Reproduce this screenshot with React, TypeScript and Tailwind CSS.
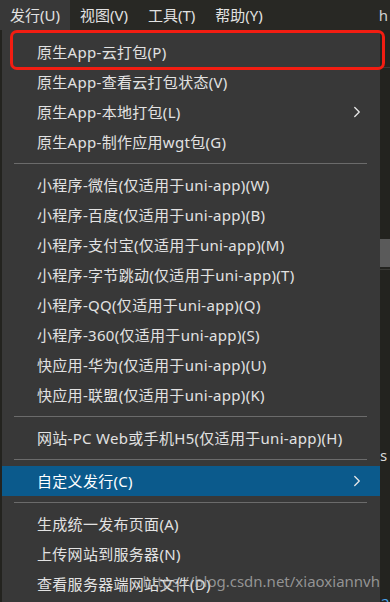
import { ChevronRight } from "lucide-react";

type Entry = { label: string; sub?: boolean; active?: boolean } | "sep";

const entries: Entry[] = [
  { label: "原生App-云打包(P)" },
  { label: "原生App-查看云打包状态(V)" },
  { label: "原生App-本地打包(L)", sub: true },
  { label: "原生App-制作应用wgt包(G)" },
  "sep",
  { label: "小程序-微信(仅适用于uni-app)(W)" },
  { label: "小程序-百度(仅适用于uni-app)(B)" },
  { label: "小程序-支付宝(仅适用于uni-app)(M)" },
  { label: "小程序-字节跳动(仅适用于uni-app)(T)" },
  { label: "小程序-QQ(仅适用于uni-app)(Q)" },
  { label: "小程序-360(仅适用于uni-app)(S)" },
  { label: "快应用-华为(仅适用于uni-app)(U)" },
  { label: "快应用-联盟(仅适用于uni-app)(K)" },
  "sep",
  { label: "网站-PC Web或手机H5(仅适用于uni-app)(H)" },
  "sep",
  { label: "自定义发行(C)", sub: true, active: true },
  "sep",
  { label: "生成统一发布页面(A)" },
  { label: "上传网站到服务器(N)" },
  { label: "查看服务器端网站文件(D)" },
];

const menus = ["发行(U)", "视图(V)", "工具(T)", "帮助(Y)"];

export default function App() {
  return (
    <div
      className="relative w-[390px] h-[602px] overflow-hidden bg-[#23231f] text-[15px] text-[#e2e2e2]"
      style={{ fontFamily: '"Noto Sans", "Noto Sans CJK SC", sans-serif' }}
    >
      {/* menubar */}
      <div className="flex h-[30px] items-center bg-[#282824]">
        {menus.map((m, i) => (
          <div
            key={m}
            className={`flex h-full items-center px-[10px] ${i === 0 ? "bg-[#383838]" : ""}`}
          >
            {m}
          </div>
        ))}
        <div className="ml-auto pr-[2px] text-[#d0d0d0]">h</div>
      </div>

      <div className="flex">
        {/* dropdown */}
        <div className="relative ml-[2px] w-[378px] h-[572px] bg-[#383838] pt-[7px] tracking-[0.3px]">
          {entries.map((e, i) =>
            e === "sep" ? (
              <div key={i} className="py-[6px] pl-[12px] pr-[13px]">
                <div className="h-px bg-[#6b6b6b]" />
              </div>
            ) : (
              <div
                key={i}
                className={`flex h-[30px] items-center pl-[35px] pr-[14px] ${e.active ? "bg-[#0b5a8c] text-white" : ""}`}
              >
                <span className="whitespace-nowrap">{e.label}</span>
                {e.sub && (
                  <ChevronRight className="ml-auto h-[18px] w-[18px] text-[#e8e8e8]" strokeWidth={1.75} />
                )}
              </div>
            )
          )}
          <div className="pointer-events-none absolute right-0 top-[540px] whitespace-nowrap tracking-normal text-[#bdbdbd]/70">
            https://blog.csdn.net/xiaoxiannvh
          </div>
        </div>

        {/* editor strip behind */}
        <div className="flex-1 relative">
          <div className="mt-[37px] h-px bg-[#3a3a36]" />
          <div className="mt-[171px] h-[28px] bg-[#5a5a5a]" />
          <div className="mt-[2px] h-px bg-[#3a3a36]" />
          <div className="absolute left-0 top-[414px] text-[#d8d8d8]">s</div>
          <div className="absolute left-[1px] top-[562px] text-[#4aa3e8]">2</div>
        </div>
      </div>

      {/* highlight box */}
      <div className="pointer-events-none absolute left-[10px] top-[30px] h-[40px] w-[375px] rounded-[7px] border-[3px] border-[#f21d12]" />
    </div>
  );
}
